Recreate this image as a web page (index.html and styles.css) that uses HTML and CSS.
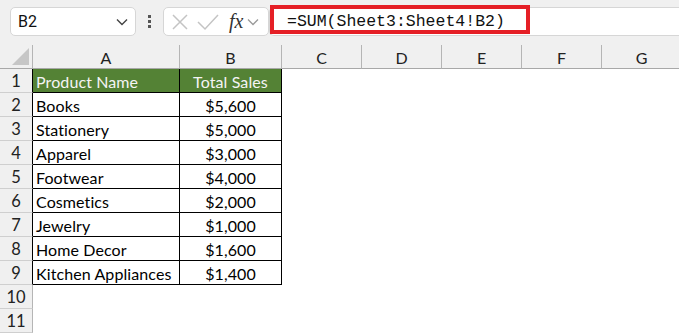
FILE: index.html
```html
<!DOCTYPE html>
<html lang="en">

<head>
    <meta charset="UTF-8">
    <title>Sheet - Total Sales</title>
    <link rel="stylesheet" href="styles.css">
</head>

<body>
    <div class="toolbar">
        <div class="name-box">
            <span>B2</span>
            <svg class="chev" width="12" height="8" viewBox="0 0 12 8"><path d="M1 1.5 L6 6.5 L11 1.5" fill="none" stroke="#444" stroke-width="1.4"/></svg>
        </div>
        <div class="dots"><i></i><i></i><i></i></div>
        <div class="fx-box">
            <svg width="18" height="18" viewBox="0 0 18 18"><path d="M2 2 L16 16 M16 2 L2 16" stroke="#c4c4c4" stroke-width="1.5"/></svg>
            <svg width="22" height="18" viewBox="0 0 22 18"><path d="M1 9 L8 16 L21 2" fill="none" stroke="#c4c4c4" stroke-width="1.5"/></svg>
            <span class="fx">fx</span>
            <svg width="12" height="8" viewBox="0 0 12 8"><path d="M1 1.5 L6 6.5 L11 1.5" fill="none" stroke="#9a9a9a" stroke-width="1.3"/></svg>
        </div>
        <div class="formula">
            <span>=SUM(Sheet3:Sheet4!B2)</span>
            <div class="highlight"></div>
        </div>
    </div>

    <div class="sheet">
        <div class="corner"><svg width="17" height="17" viewBox="0 0 17 17"><path d="M17 0 L17 17 L0 17 Z" fill="#c6c6c6"/></svg></div>
        <div class="col-head">A</div>
        <div class="col-head">B</div>
        <div class="col-head">C</div>
        <div class="col-head">D</div>
        <div class="col-head">E</div>
        <div class="col-head">F</div>
        <div class="col-head">G</div>
    </div>
    <div class="sheet" id="rows"></div>

    <script>
        const data = [
            ['Books', '$5,600'],
            ['Stationery', '$5,000'],
            ['Apparel', '$3,000'],
            ['Footwear', '$4,000'],
            ['Cosmetics', '$2,000'],
            ['Jewelry', '$1,000'],
            ['Home Decor', '$1,600'],
            ['Kitchen Appliances', '$1,400']
        ];

        const rows = document.getElementById('rows');
        let html = `<div class="row-head edge">1</div>
            <div class="cell head">Product Name</div>
            <div class="cell head num">Total Sales</div>` + '<div class="empty"></div>'.repeat(5);

        data.forEach((item, i) => {
            html += `<div class="row-head edge">${i + 2}</div>
                <div class="cell">${item[0]}</div>
                <div class="cell num">${item[1]}</div>` + '<div class="empty"></div>'.repeat(5);
        });

        for (let r = 10; r <= 11; r++) {
            html += `<div class="row-head">${r}</div>` + '<div class="empty"></div>'.repeat(7);
        }
        rows.innerHTML = html;
    </script>
</body>

</html>
```

FILE: styles.css
```css
* {
    margin: 0;
    padding: 0;
    box-sizing: border-box;
}

body {
    width: 679px;
    height: 334px;
    overflow: hidden;
    background: #fff;
    font-family: Lato, "Open Sans", sans-serif;
    color: #000;
}

.toolbar {
    height: 45px;
    background: #f0f0f0;
    display: flex;
    align-items: center;
    padding-left: 10px;
    padding-bottom: 2px;
}

.name-box {
    width: 126px;
    height: 29px;
    background: #fff;
    border: 1px solid #d6d6d6;
    border-radius: 5px;
    display: flex;
    align-items: center;
    justify-content: space-between;
    padding: 0 7px 0 7px;
    font-family: Roboto, "Liberation Sans", sans-serif;
    font-size: 16px;
    color: #111;
}

.dots {
    width: 27px;
    display: flex;
    flex-direction: column;
    align-items: center;
    gap: 2px;
}

.dots i {
    width: 3px;
    height: 3px;
    background: #555;
}

.fx-box {
    width: 106px;
    height: 29px;
    background: #fff;
    border: 1px solid #d6d6d6;
    border-radius: 5px;
    display: flex;
    align-items: center;
    gap: 8px;
    padding-left: 7px;
}

.fx {
    font-family: "Liberation Serif", serif;
    font-style: italic;
    font-size: 20px;
    color: #333;
    margin-left: 2px;
    margin-right: -4px;
}

.formula {
    position: relative;
    flex: 1;
    height: 29px;
    background: #fff;
    border: 1px solid #d6d6d6;
    border-right: none;
    border-radius: 5px 0 0 5px;
    display: flex;
    align-items: center;
    padding-left: 17px;
    font-family: "Liberation Mono", "DejaVu Sans Mono", monospace;
    font-size: 16.5px;
    color: #111;
}

.highlight {
    position: absolute;
    left: 0;
    top: -3px;
    width: 260px;
    height: 29px;
    border: 4px solid #e51f26;
}

.sheet {
    display: grid;
    grid-template-columns: 33px 147px 102px repeat(5, 80px);
    grid-auto-rows: 24px;
}

.corner {
    background: #f0f0f0;
    border-right: 1px solid #b5b5b5;
    border-bottom: 1px solid #a8a8a8;
    display: flex;
    align-items: flex-end;
    justify-content: flex-end;
    padding: 0 3px 3px 0;
}

.col-head {
    background: #f0f0f0;
    border-bottom: 1px solid #a8a8a8;
    border-right: 1px solid #b5b5b5;
    display: flex;
    align-items: center;
    justify-content: center;
    padding-top: 1px;
    font-size: 16px;
    color: #222;
}

.row-head {
    background: #f0f0f0;
    border-right: 1px solid #b5b5b5;
    border-bottom: 1px solid #cfcfcf;
    display: flex;
    align-items: center;
    justify-content: center;
    padding-top: 1px;
    font-size: 16.5px;
    color: #222;
}

.row-head.edge {
    border-right-color: #000;
}

.cell {
    border-right: 1px solid #000;
    border-bottom: 1px solid #000;
    display: flex;
    align-items: center;
    padding: 1px 0 0 3px;
    font-size: 16px;
    letter-spacing: 0.1px;
    white-space: nowrap;
}

.cell.num {
    justify-content: center;
    padding-left: 0;
}

.cell.head {
    background: #548235;
    color: #f4f4f4;
}
```
